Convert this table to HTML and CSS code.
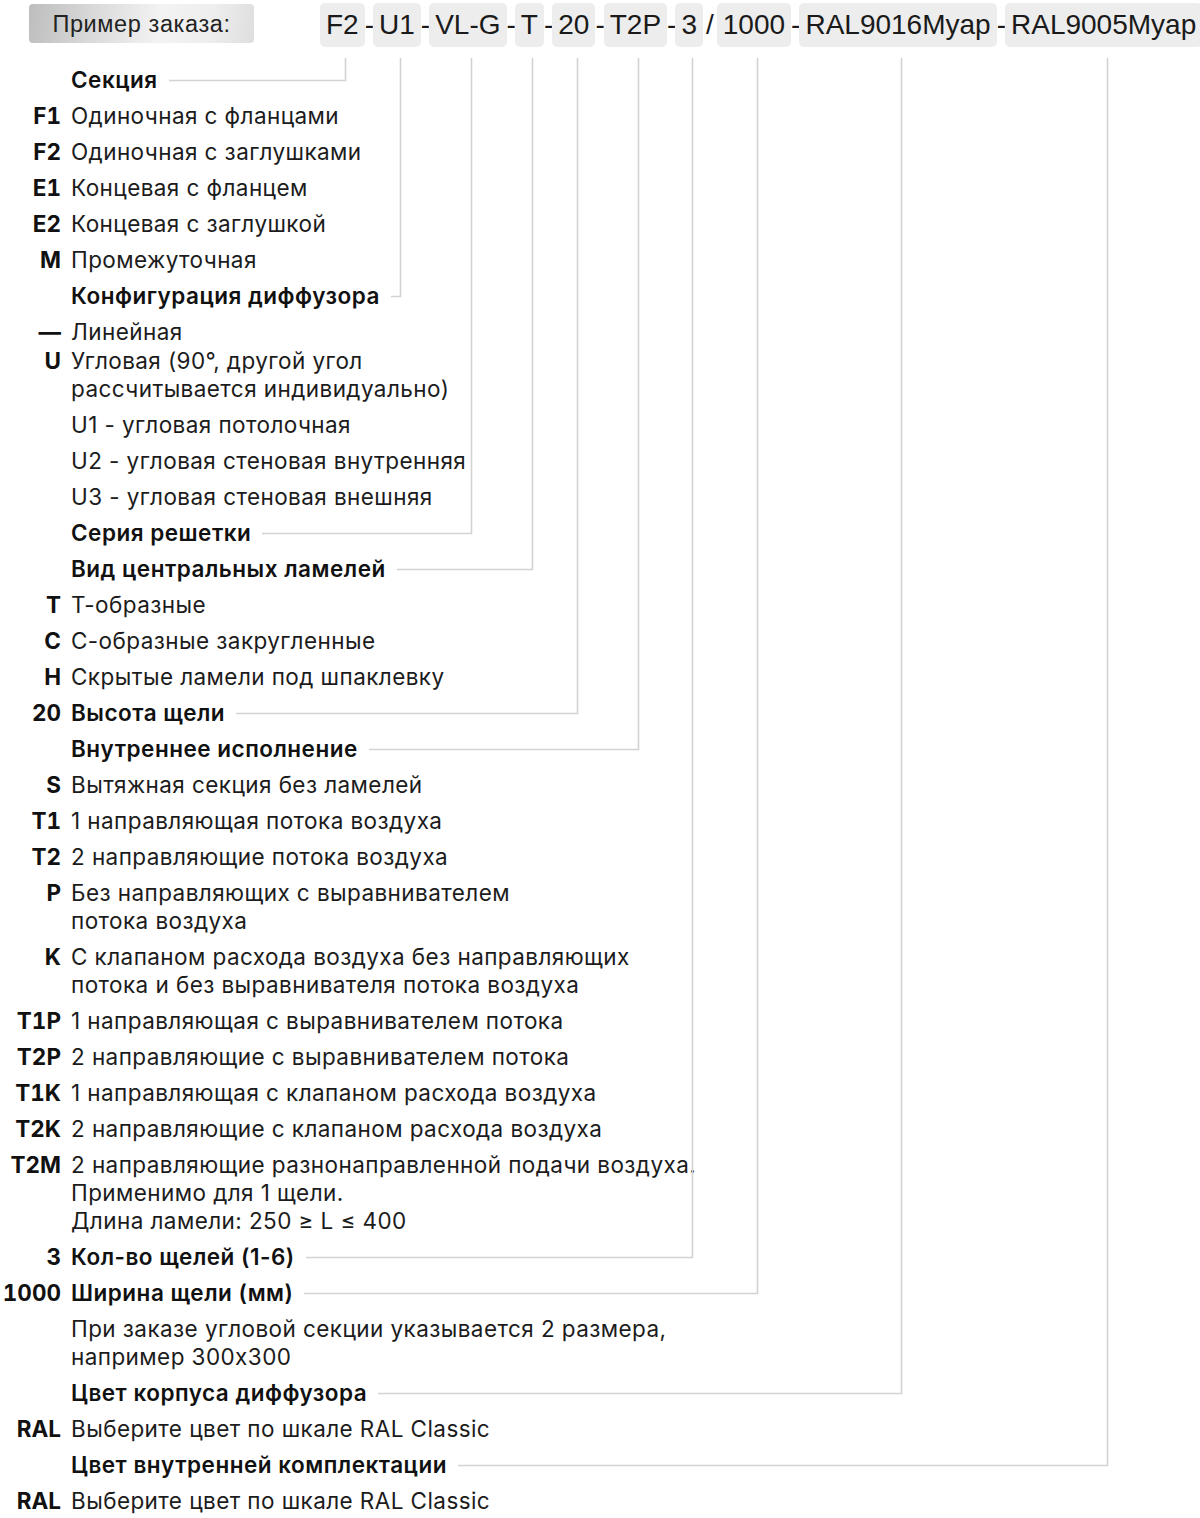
FILE: index.html
```html
<!DOCTYPE html>
<html lang="ru">
<head>
<meta charset="utf-8">
<title>Пример заказа</title>
<link rel="stylesheet" href="styles.css">
</head>
<body>
<div class="page">
  <header class="order">
    <div class="order-label">Пример заказа:</div>
    <div class="order-code">
      <span class="chip" data-target="h1">F2</span><span class="sep">-</span>
      <span class="chip" data-target="h2">U1</span><span class="sep">-</span>
      <span class="chip" data-target="h3">VL-G</span><span class="sep">-</span>
      <span class="chip" data-target="h4">T</span><span class="sep">-</span>
      <span class="chip" data-target="h5">20</span><span class="sep">-</span>
      <span class="chip" data-target="h6">T2P</span><span class="sep">-</span>
      <span class="chip" data-target="h7">3</span><span class="sep slash">/</span>
      <span class="chip" data-target="h8">1000</span><span class="sep">-</span>
      <span class="chip" data-target="h9">RAL9016Myap</span><span class="sep">-</span>
      <span class="chip" data-target="h10">RAL9005Myap</span>
    </div>
  </header>

  <div class="legend">
    <div class="row"><span class="code"></span><span class="desc head"><span id="h1">Секция</span></span></div>
    <div class="row"><span class="code">F1</span><span class="desc">Одиночная с фланцами</span></div>
    <div class="row"><span class="code">F2</span><span class="desc">Одиночная с заглушками</span></div>
    <div class="row"><span class="code">E1</span><span class="desc">Концевая с фланцем</span></div>
    <div class="row"><span class="code">E2</span><span class="desc">Концевая с заглушкой</span></div>
    <div class="row"><span class="code">M</span><span class="desc">Промежуточная</span></div>
    <div class="row"><span class="code"></span><span class="desc head"><span id="h2">Конфигурация диффузора</span></span></div>
    <div class="row row-tight"><span class="code">—</span><span class="desc">Линейная</span></div>
    <div class="row"><span class="code">U</span><span class="desc">Угловая (90°, другой угол<br>рассчитывается индивидуально)</span></div>
    <div class="row"><span class="code"></span><span class="desc">U1 - угловая потолочная</span></div>
    <div class="row"><span class="code"></span><span class="desc">U2 - угловая стеновая внутренняя</span></div>
    <div class="row"><span class="code"></span><span class="desc">U3 - угловая стеновая внешняя</span></div>
    <div class="row"><span class="code"></span><span class="desc head"><span id="h3">Серия решетки</span></span></div>
    <div class="row"><span class="code"></span><span class="desc head"><span id="h4">Вид центральных ламелей</span></span></div>
    <div class="row"><span class="code">T</span><span class="desc">Т-образные</span></div>
    <div class="row"><span class="code">C</span><span class="desc">С-образные закругленные</span></div>
    <div class="row"><span class="code">H</span><span class="desc">Скрытые ламели под шпаклевку</span></div>
    <div class="row"><span class="code">20</span><span class="desc head"><span id="h5">Высота щели</span></span></div>
    <div class="row"><span class="code"></span><span class="desc head"><span id="h6">Внутреннее исполнение</span></span></div>
    <div class="row"><span class="code">S</span><span class="desc">Вытяжная секция без ламелей</span></div>
    <div class="row"><span class="code">T1</span><span class="desc">1 направляющая потока воздуха</span></div>
    <div class="row"><span class="code">T2</span><span class="desc">2 направляющие потока воздуха</span></div>
    <div class="row"><span class="code">P</span><span class="desc">Без направляющих с выравнивателем<br>потока воздуха</span></div>
    <div class="row"><span class="code">K</span><span class="desc">С клапаном расхода воздуха без направляющих<br>потока и без выравнивателя потока воздуха</span></div>
    <div class="row"><span class="code">T1P</span><span class="desc">1 направляющая с выравнивателем потока</span></div>
    <div class="row"><span class="code">T2P</span><span class="desc">2 направляющие с выравнивателем потока</span></div>
    <div class="row"><span class="code">T1K</span><span class="desc">1 направляющая с клапаном расхода воздуха</span></div>
    <div class="row"><span class="code">T2K</span><span class="desc">2 направляющие с клапаном расхода воздуха</span></div>
    <div class="row"><span class="code">T2M</span><span class="desc">2 направляющие разнонаправленной подачи воздуха.<br>Применимо для 1 щели.<br>Длина ламели: 250 ≥ L ≤ 400</span></div>
    <div class="row"><span class="code">3</span><span class="desc head"><span id="h7">Кол-во щелей (1-6)</span></span></div>
    <div class="row"><span class="code">1000</span><span class="desc head"><span id="h8">Ширина щели (мм)</span></span></div>
    <div class="row"><span class="code"></span><span class="desc">При заказе угловой секции указывается 2 размера,<br>например 300х300</span></div>
    <div class="row"><span class="code"></span><span class="desc head"><span id="h9">Цвет корпуса диффузора</span></span></div>
    <div class="row"><span class="code">RAL</span><span class="desc">Выберите цвет по шкале RAL Classic</span></div>
    <div class="row"><span class="code"></span><span class="desc head"><span id="h10">Цвет внутренней комплектации</span></span></div>
    <div class="row"><span class="code">RAL</span><span class="desc">Выберите цвет по шкале RAL Classic</span></div>
  </div>

  <svg class="connectors" id="connectors" xmlns="http://www.w3.org/2000/svg"></svg>
</div>
<script src="script.js"></script>
</body>
</html>
```

FILE: styles.css
```css
html, body {
  margin: 0;
  padding: 0;
  background: #ffffff;
}

body {
  font-family: Inter, "Noto Sans", sans-serif;
  color: #1c1c1c;
  width: 1200px;
  overflow: hidden;
}

.page {
  position: relative;
  min-height: 1518px;
}

.order {
  display: flex;
  align-items: flex-start;
  gap: 66px;
  padding: 3px 0 0 29px;
  white-space: nowrap;
}

.order-label {
  flex-shrink: 0;
  margin-top: 1px;
  width: 225px;
  height: 39px;
  box-sizing: border-box;
  border-radius: 4px;
  background: linear-gradient(100deg, #bdbdbd 0%, #d9d9d9 28%, #f3f3f3 58%, #eeeeee 80%, #dedede 100%);
  font-family: "Liberation Sans", Arial, sans-serif;
  font-size: 23.5px;
  letter-spacing: 0.6px;
  line-height: 40px;
  color: #222;
  text-align: center;
}

.order-code {
  flex-shrink: 0;
  display: flex;
  align-items: center;
  font-family: "Liberation Sans", Arial, sans-serif;
  font-size: 28px;
  color: #1a1a1a;
}

.chip {
  display: block;
  height: 44px;
  line-height: 44px;
  padding: 0 6px;
  background: #ededed;
  border-radius: 5px;
}

.sep {
  display: block;
  line-height: 44px;
  padding: 0;
  letter-spacing: -1px;
}

.sep.slash {
  padding: 0 3px;
  letter-spacing: 0;
}

.legend {
  margin-top: 15px;
  display: flex;
  flex-direction: column;
}

.row {
  display: grid;
  grid-template-columns: 61px 1fr;
  column-gap: 10px;
  padding: 4px 0;
  font-size: 22.5px;
  line-height: 28px;
}

.row-tight {
  margin-bottom: -7px;
}

.code {
  text-align: right;
  font-weight: 700;
  font-variant-numeric: tabular-nums;
  color: #111;
  white-space: nowrap;
}

.desc {
  font-weight: 400;
  letter-spacing: 0.42px;
}

.desc.head {
  font-weight: 600;
  letter-spacing: 0.5px;
  color: #111;
}

.connectors {
  position: absolute;
  left: 0;
  top: 0;
  width: 1200px;
  height: 1518px;
  pointer-events: none;
}

.connectors path {
  fill: none;
  stroke: #d3d3d3;
  stroke-width: 1.6;
}
```

FILE: script.js
```js
(function () {
  var svg = document.getElementById('connectors');
  var page = svg.parentNode.getBoundingClientRect();
  var chips = document.querySelectorAll('.chip[data-target]');
  var ns = 'http://www.w3.org/2000/svg';
  chips.forEach(function (chip) {
    var target = document.getElementById(chip.getAttribute('data-target'));
    if (!target) return;
    var c = chip.getBoundingClientRect();
    var t = target.getBoundingClientRect();
    var x = Math.round(c.left + c.width / 2 - page.left + 3) + 0.5;
    var top = Math.round(c.bottom - page.top + 11);
    var y = Math.round(t.top + t.height / 2 - page.top) + 0.5;
    var startX = Math.round(t.right - page.left + 11);
    var p = document.createElementNS(ns, 'path');
    p.setAttribute('d', 'M' + startX + ' ' + y + ' H' + x + ' V' + top);
    svg.appendChild(p);
  });
})();
```
